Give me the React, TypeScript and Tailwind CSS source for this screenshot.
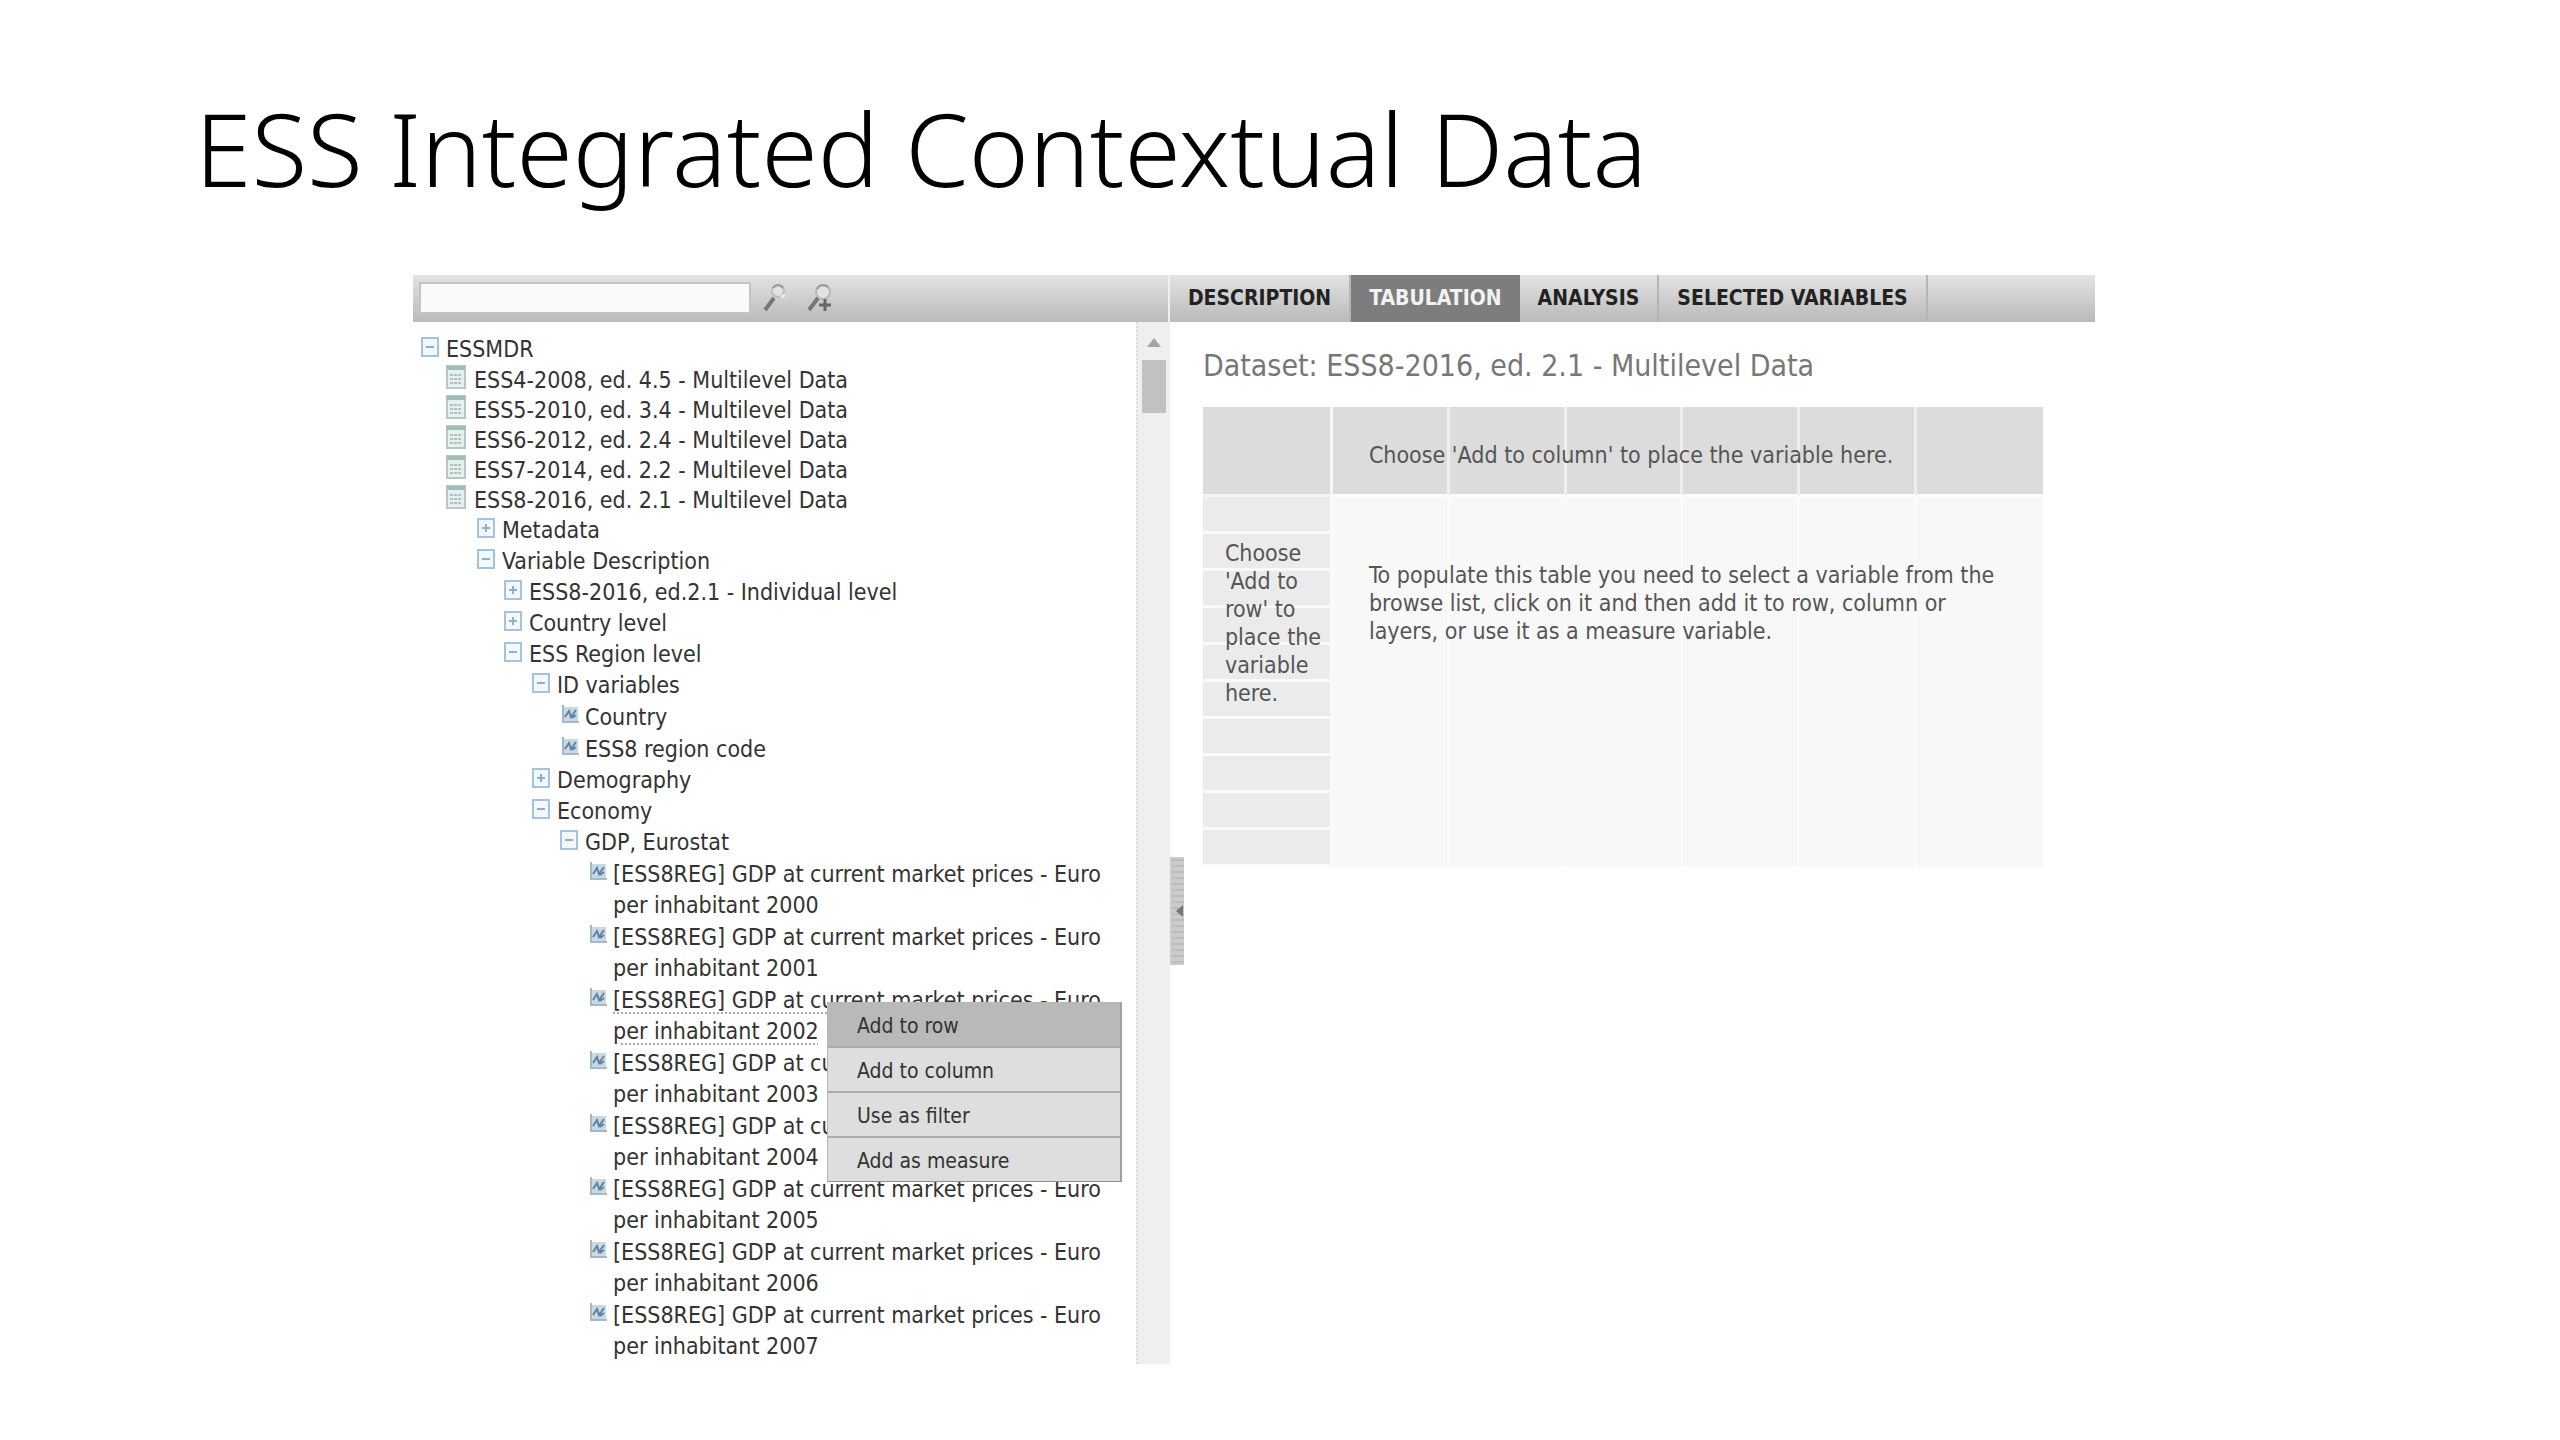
import { useState } from "react";

type NodeKind = "open" | "closed" | "dataset" | "leaf";

interface TreeNode {
  label: string;
  kind: NodeKind;
  indent: string;
}

const gdpYears = [2000, 2001, 2002, 2003, 2004, 2005, 2006, 2007];

const nodes: TreeNode[] = [
  { label: "ESSMDR", kind: "open", indent: "pl-[5px]" },
  { label: "ESS4-2008, ed. 4.5 - Multilevel Data", kind: "dataset", indent: "pl-[33px]" },
  { label: "ESS5-2010, ed. 3.4 - Multilevel Data", kind: "dataset", indent: "pl-[33px]" },
  { label: "ESS6-2012, ed. 2.4 - Multilevel Data", kind: "dataset", indent: "pl-[33px]" },
  { label: "ESS7-2014, ed. 2.2 - Multilevel Data", kind: "dataset", indent: "pl-[33px]" },
  { label: "ESS8-2016, ed. 2.1 - Multilevel Data", kind: "dataset", indent: "pl-[33px]" },
  { label: "Metadata", kind: "closed", indent: "pl-[61px]" },
  { label: "Variable Description", kind: "open", indent: "pl-[61px]" },
  { label: "ESS8-2016, ed.2.1 - Individual level", kind: "closed", indent: "pl-[88px]" },
  { label: "Country level", kind: "closed", indent: "pl-[88px]" },
  { label: "ESS Region level", kind: "open", indent: "pl-[88px]" },
  { label: "ID variables", kind: "open", indent: "pl-[116px]" },
  { label: "Country", kind: "leaf", indent: "pl-[144px]" },
  { label: "ESS8 region code", kind: "leaf", indent: "pl-[144px]" },
  { label: "Demography", kind: "closed", indent: "pl-[116px]" },
  { label: "Economy", kind: "open", indent: "pl-[116px]" },
  { label: "GDP, Eurostat", kind: "open", indent: "pl-[144px]" },
  ...gdpYears.map((year) => ({
    label: `[ESS8REG] GDP at current market prices - Euro per inhabitant ${year}`,
    kind: "leaf" as NodeKind,
    indent: "pl-[172px]",
  })),
];

const tabs = ["DESCRIPTION", "TABULATION", "ANALYSIS", "SELECTED VARIABLES"];
const menuItems = ["Add to row", "Add to column", "Use as filter", "Add as measure"];

function NodeIcon({ kind }: { kind: NodeKind }) {
  if (kind === "dataset") {
    return (
      <svg width="20" height="24" viewBox="0 0 20 24">
        <rect x="1" y="1" width="18" height="22" fill="#e6f0ee" stroke="#b4c8c6" strokeWidth="2" />
        <rect x="1" y="1" width="18" height="4" fill="#a3bcb8" />
        <path d="M4 10h12M4 14h12M4 18h12" stroke="#adc2be" strokeWidth="2" strokeDasharray="3 1" />
      </svg>
    );
  }
  if (kind === "leaf") {
    return (
      <svg width="17" height="19" viewBox="0 0 17 19" className="ml-[5px]">
        <rect x="1" y="2" width="15" height="14" fill="#c6d9e5" />
        <path d="M1 0v17h16" fill="none" stroke="#a3b9c8" strokeWidth="2" />
        <path d="M3 12l4-6 2 6 5-7M10 13l4-3" fill="none" stroke="#64829a" strokeWidth="2" />
      </svg>
    );
  }
  return (
    <svg width="18" height="20" viewBox="0 0 18 20" className="ml-[3px]">
      <rect x="1" y="1" width="16" height="18" fill="#f3f8fd" stroke="#a3c3e0" strokeWidth="2" />
      <path d="M5 10h8" stroke="#8fb0cd" strokeWidth="2" />
      {kind === "closed" && <path d="M9 6v8" stroke="#8fb0cd" strokeWidth="2" />}
    </svg>
  );
}

function TreeRow({ node, selected, onSelect }: { node: TreeNode; selected: boolean; onSelect: () => void }) {
  const leading =
    node.kind === "dataset" ? "leading-[30px]" : node.kind === "leaf" ? "leading-[31px] pt-px" : "leading-[31px]";
  return (
    <li className={node.indent}>
      <button type="button" onClick={onSelect} className={`flex items-start text-left ${leading}`}>
        <span className={`w-7 shrink-0 ${node.kind === "dataset" ? "" : "pt-[3px]"}`}>
          <NodeIcon kind={node.kind} />
        </span>
        <span className={selected ? "underline decoration-dotted decoration-[#aaa] decoration-2 underline-offset-4" : ""}>
          {node.label}
        </span>
      </button>
    </li>
  );
}

function ContextMenu() {
  return (
    <ul className="absolute left-[414px] top-[680px] w-[295px] border border-[#b5b5b5] border-r-2 border-r-[#a0a0a0] border-b-[#8f8f8f] bg-[#dedede] text-[21px]">
      {menuItems.map((item, i) => (
        <li key={item} className={i < menuItems.length - 1 ? "border-b-2 border-[#acacac]" : ""}>
          <button
            type="button"
            className={`block h-[43px] w-full pl-[29px] pt-1 text-left text-[#333] ${i === 0 ? "bg-[#b9b9b9]" : ""}`}
          >
            {item}
          </button>
        </li>
      ))}
    </ul>
  );
}

function TabulationTable() {
  return (
    <div className="relative mt-[21px] text-[#555]">
      <table className="w-full table-fixed border-separate border-spacing-0">
        <thead>
          <tr className="h-[90px]">
            <th className="w-[130px] border-b-3 border-r-3 border-[#f6f6f6] bg-[#dcdcdc]" />
            {[1, 2, 3, 4, 5].map((c) => (
              <th key={c} className="border-b-3 border-r-3 border-r-[#efefef] border-b-white bg-[#dcdcdc]" />
            ))}
            <th className="w-[126px] border-b-3 border-white bg-[#dcdcdc]" />
          </tr>
        </thead>
        <tbody>
          {[1, 2, 3, 4, 5, 6, 7, 8, 9, 10].map((r) => (
            <tr key={r} className="h-[37px]">
              <th className="border-b-3 border-r-3 border-[#fafafa] bg-[#ebebeb]" />
              {[1, 2, 3, 4, 5].map((c) => (
                <td key={c} className="border-r-3 border-[#fbfbfb] bg-[#f8f8f8]" />
              ))}
              <td className="bg-[#f8f8f8]" />
            </tr>
          ))}
        </tbody>
      </table>
      <p className="absolute left-[166px] top-[34px] leading-7">Choose 'Add to column' to place the variable here.</p>
      <p className="absolute left-[22px] top-[132px] w-[104px] leading-7">Choose 'Add to row' to place the variable here.</p>
      <p className="absolute left-[166px] right-10 top-[154px] leading-7">
        To populate this table you need to select a variable from the browse list, click on it and then add it to row,
        column or layers, or use it as a measure variable.
      </p>
    </div>
  );
}

function App() {
  const [activeTab, setActiveTab] = useState("TABULATION");
  const [selected, setSelected] = useState(19);
  const [query, setQuery] = useState("");

  return (
    <div className="min-h-screen bg-white pb-[76px] pl-[413px] pr-[465px] font-['DejaVu_Sans_Condensed','DejaVu_Sans',sans-serif] text-[23px] text-[#333]">
      <h1 className="-ml-[218px] pb-[57px] pt-[78px] font-['Noto_Sans',sans-serif] text-[102px] font-light leading-[140px] text-black">
        ESS Integrated Contextual Data
      </h1>

      <main>
        <div className="flex h-[47px] bg-linear-to-b from-[#e3e3e3] to-[#bababa]">
          <form className="flex w-[45%] items-center border-r-2 border-[#efefef] pb-0.5 pl-[6px]">
            <input
              type="text"
              aria-label="Search"
              value={query}
              onChange={(e) => setQuery(e.target.value)}
              className="h-8 w-[332px] border-2 border-[#c4c4c4] bg-[#fafafa] px-2 outline-none"
            />
            <button type="button" aria-label="Search" className="ml-3">
              <svg width="24" height="30" viewBox="0 0 24 30">
                <circle cx="15" cy="8" r="6" fill="#e2e2e2" stroke="#bdbdbd" strokeWidth="2" />
                <path d="M10 5a6 6 0 0 1 10 0" fill="none" stroke="#999" strokeWidth="2" />
                <path d="M18 14l4-2" stroke="#ececec" strokeWidth="3" />
                <path d="M11 15L2 27" stroke="#777" strokeWidth="4" />
              </svg>
            </button>
            <button type="button" aria-label="Advanced search" className="ml-5">
              <svg width="26" height="30" viewBox="0 0 26 30">
                <circle cx="16" cy="9" r="7" fill="#e2e2e2" stroke="#b8b8b8" strokeWidth="2" />
                <path d="M10 6a7 7 0 0 1 11-2" fill="none" stroke="#999" strokeWidth="2" />
                <path d="M11 15L2 27" stroke="#777" strokeWidth="4" />
                <path d="M18 16v12M12 22h12" stroke="#666" strokeWidth="3" />
              </svg>
            </button>
          </form>
          <nav className="flex text-[21px] font-bold text-[#222]">
            {tabs.map((tab) => (
              <button
                key={tab}
                type="button"
                onClick={() => setActiveTab(tab)}
                className={
                  tab === activeTab
                    ? "bg-[#7d7d7d] px-[18px] text-[#f2f2f2]"
                    : "border-r-2 border-[#b5b5b5] px-[18px]"
                }
              >
                {tab}
              </button>
            ))}
          </nav>
        </div>

        <div className="flex">
          <div className="relative flex w-[45%]">
            <ul className="flex-1 pb-[2px] pt-3 pr-4">
              {nodes.map((node, i) => (
                <TreeRow key={node.label} node={node} selected={selected === i} onSelect={() => setSelected(i)} />
              ))}
            </ul>
            <div className="flex w-[34px] flex-col items-center border-l-2 border-dotted border-[#dcdcdc] bg-[#efefef] pt-4">
              <svg width="14" height="9" viewBox="0 0 14 9">
                <path d="M7 0l7 9H0z" fill="#a5a5a5" />
              </svg>
              <div className="mt-[13px] h-[53px] w-6 bg-[#c1c1c1]" />
            </div>
            <ContextMenu />
          </div>

          <section className="relative flex-1 pl-[33px] pr-[52px] pt-6">
            <h2 className="text-[30px] leading-10 text-[#777]">Dataset: ESS8-2016, ed. 2.1 - Multilevel Data</h2>
            <TabulationTable />
            <button type="button" aria-label="Collapse panel" className="absolute left-0 top-[535px]">
              <svg width="14" height="108" viewBox="0 0 14 108">
                <rect width="14" height="108" fill="#cbcbcb" />
                <path d="M8 2v104" stroke="#bcbcbc" strokeWidth="12" strokeDasharray="2 4" />
                <path d="M13 48v12l-7-6z" fill="#777" />
              </svg>
            </button>
          </section>
        </div>
      </main>
    </div>
  );
}

export default App;
